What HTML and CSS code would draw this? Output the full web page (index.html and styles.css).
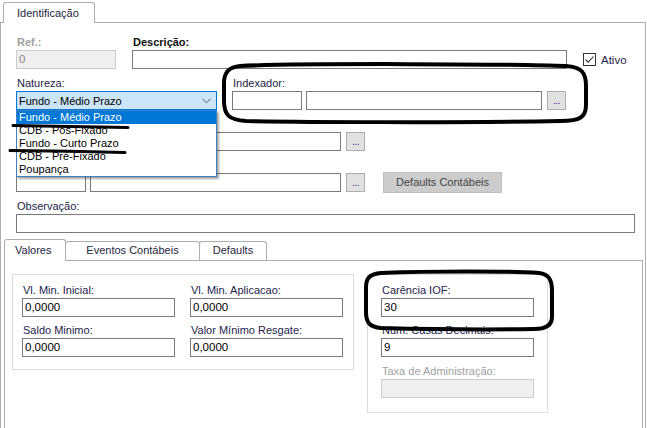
FILE: index.html
```html
<!DOCTYPE html>
<html>
<head>
<meta charset="utf-8">
<link rel="stylesheet" href="styles.css">
</head>
<body>
<div class="root">
  <div class="tabstrip">
    <div class="tab tab-main">Identificação</div>
  </div>
  <div class="page">
    <div class="row row-a">
      <div class="field w-ref">
        <div class="lbl bold disabled-text">Ref.:</div>
        <div class="input disabled">0</div>
      </div>
      <div class="field w-desc">
        <div class="lbl bold black">Descrição:</div>
        <div class="input"></div>
      </div>
      <div class="check">
        <span class="box"><svg width="11" height="11" viewBox="0 0 11 11"><path d="M1.5 5.5 L4.2 8.2 L9.5 2.5" fill="none" stroke="#333" stroke-width="1.1"/></svg></span>
        <span class="check-text">Ativo</span>
      </div>
    </div>

    <div class="row row-gap">
      <div class="field w-nat">
        <div class="lbl">Natureza:</div>
        <div class="combo"><span>Fundo - Médio Prazo</span>
          <svg class="chev" width="9" height="6" viewBox="0 0 9 6"><path d="M0.5 0.8 L4.5 4.8 L8.5 0.8" fill="none" stroke="#555" stroke-width="1"/></svg>
        </div>
      </div>
      <div class="field w-idx">
        <div class="lbl">Indexador:</div>
        <div class="inline">
          <div class="input w70"></div>
          <div class="input w236"></div>
          <div class="dots">...</div>
        </div>
      </div>
    </div>

    <div class="row row-gap">
      <div class="field">
        <div class="lbl"></div>
        <div class="inline">
          <div class="input w70"></div>
          <div class="input w251"></div>
          <div class="dots">...</div>
        </div>
      </div>
    </div>

    <div class="row row-gap row-end">
      <div class="field">
        <div class="lbl"></div>
        <div class="inline">
          <div class="input w70"></div>
          <div class="input w251"></div>
          <div class="dots">...</div>
        </div>
      </div>
      <div class="btn-defaults">Defaults Contábeis</div>
    </div>

    <div class="row row-gap">
      <div class="field">
        <div class="lbl">Observação:</div>
        <div class="input w-obs"></div>
      </div>
    </div>

    <div class="inner">
      <div class="inner-tabs">
        <div class="itab itab-active">Valores</div>
        <div class="itab w-ev">Eventos Contábeis</div>
        <div class="itab w-def">Defaults</div>
      </div>
      <div class="inner-page">
        <div class="group g1">
          <div class="grow">
            <div class="field">
              <div class="lbl">Vl. Min. Inicial:</div>
              <div class="input w153">0,0000</div>
            </div>
            <div class="field col2">
              <div class="lbl">Vl. Min. Aplicacao:</div>
              <div class="input w153">0,0000</div>
            </div>
          </div>
          <div class="grow grow-gap">
            <div class="field">
              <div class="lbl">Saldo Minimo:</div>
              <div class="input w153">0,0000</div>
            </div>
            <div class="field col2">
              <div class="lbl">Valor Mínimo Resgate:</div>
              <div class="input w153">0,0000</div>
            </div>
          </div>
        </div>
        <div class="group g2">
          <div class="field">
            <div class="lbl">Carência IOF:</div>
            <div class="input w153">30</div>
          </div>
          <div class="field grow-gap">
            <div class="lbl">Num. Casas Decimais:</div>
            <div class="input w153">9</div>
          </div>
          <div class="field grow-gap2">
            <div class="lbl disabled-text">Taxa de Administração:</div>
            <div class="input w153 disabled"></div>
          </div>
        </div>
      </div>
    </div>
  </div>

  <div class="dropdown">
    <div class="opt sel">Fundo - Médio Prazo</div>
    <div class="opt">CDB - Pós-Fixado</div>
    <div class="opt">Fundo - Curto Prazo</div>
    <div class="opt">CDB - Pré-Fixado</div>
    <div class="opt">Poupança</div>
  </div>

  <svg class="marks" width="647" height="428" viewBox="0 0 647 428">
    <path d="M240 66 C300 63 520 64 566 66 C582 67 586 73 586 86 L586 105 C586 117 580 121 561 121 C450 123 300 122 246 121 C229 120 224 115 224 101 L224 83 C224 72 229 67 240 66 Z" fill="none" stroke="#000" stroke-width="4"/>
    <path d="M381 273 C430 271 510 271 539 273 C549 274 552 280 552 291 L552 317 C552 325 546 329 534 329 C480 330 420 329 381 328 C369 327 366 322 366 312 L366 287 C366 278 370 274 381 273 Z" fill="none" stroke="#000" stroke-width="4"/>
    <path d="M13 125.5 Q70 126.5 128 127.5" fill="none" stroke="#000" stroke-width="3" stroke-linecap="round"/>
    <path d="M10 150.5 Q68 151 125 152.5" fill="none" stroke="#000" stroke-width="3" stroke-linecap="round"/>
  </svg>
</div>
</body>
</html>
```
FILE: styles.css
```css
* { box-sizing: border-box; }
html, body { margin: 0; padding: 0; }
body {
  width: 647px;
  height: 428px;
  overflow: hidden;
  background: #ffffff;
  font-family: "Liberation Sans", Arial, sans-serif;
  font-size: 11px;
  color: #1a1a1a;
}
.root { position: relative; width: 647px; height: 428px; overflow: hidden; }

.tabstrip { height: 22px; padding-left: 3px; display: flex; align-items: flex-end; }
.tab {
  background: #fff;
  border: 1px solid #adadad;
  border-bottom: none;
  border-radius: 3px 3px 0 0;
  color: #262640;
}
.tab-main {
  width: 92px; height: 21px; margin-bottom: -1px;
  padding: 3px 0 0 13px;
  line-height: 14px;
  position: relative; z-index: 1;
}

.page {
  width: 646px;
  height: 420px;
  border: 1px solid #adadad;
  padding: 13px 0 0 15px;
}

.row { display: flex; }
.row-gap { margin-top: 8px; }
.row-end { align-items: flex-end; }

.field { display: flex; flex-direction: column; }
.lbl {
  line-height: 13px;
  height: 13px;
  margin-bottom: 1px;
  padding-left: 1px;
  color: #24244a;
  white-space: nowrap;
}
.bold { font-weight: bold; }
.black { color: #111; }
.disabled-text { color: #a0a0a0; }

.input {
  height: 19px;
  border: 1px solid #7a7a7a;
  background: #fff;
  padding: 1px 0 0 2px;
  line-height: 15px;
  color: #000;
  font-size: 11.5px;
}
.input.disabled { background: #f0f0f0; border-color: #cccccc; color: #8a8a8a; }

.w-ref { width: 100px; }
.w-desc { width: 435px; margin-left: 16px; }
.w-nat { width: 201px; }
.w-idx { margin-left: 15px; }
.w70 { width: 70px; }
.w236 { width: 236px; margin-left: 4px; }
.w251 { width: 251px; margin-left: 4px; }
.w153 { width: 153px; }
.w-obs { width: 619px; }

.inline { display: flex; }

.check { display: flex; align-items: center; margin-left: 16px; margin-top: 17px; align-self: flex-start; }
.box {
  width: 13px; height: 13px; border: 1px solid #333; background: #fff;
  display: flex; align-items: center; justify-content: center;
}
.check-text { margin-left: 5px; color: #24244a; font-size: 11.5px; }

.combo {
  height: 19px;
  background: #cce4f7;
  border: 1px solid #0078d7;
  display: flex; align-items: center; justify-content: space-between;
  padding: 0 5px 0 2px;
  color: #000;
  font-size: 11px;
}
.chev { display: block; }

.dots {
  width: 19px; height: 19px; margin-left: 5px;
  background: #e1e1e1; border: 1px solid #adadad;
  text-align: center; line-height: 17px; font-size: 10px; color: #4b2f8a;
  letter-spacing: -0.5px;
}
.btn-defaults {
  width: 119px; height: 21px; margin-left: 18px; margin-bottom: -1px;
  background: #cccccc; border: 1px solid #bfbfbf;
  text-align: center; line-height: 19px; color: #454545;
}

.inner { margin-top: 6px; margin-left: -12px; width: 639px; }
.inner-tabs { display: flex; align-items: flex-end; height: 21px; }
.itab {
  height: 19px;
  border: 1px solid #adadad;
  border-bottom: none;
  border-radius: 3px 3px 0 0;
  background: #fff;
  text-align: center;
  line-height: 17px;
  color: #262640;
  margin-left: -1px;
}
.itab-active {
  width: 62px; height: 22px; margin-bottom: -1px; margin-left: 0;
  line-height: 20px; text-align: left; padding-left: 10px;
  position: relative; z-index: 1;
}
.w-ev { width: 135px; }
.w-def { width: 68px; }

.inner-page {
  height: 200px;
  border: 1px solid #adadad;
  padding: 13px 0 0 7px;
  display: flex; align-items: flex-start;
}
.group { border: 1px solid #dcdcdc; }
.g1 { width: 342px; padding: 9px 0 12px 9px; }
.g2 { width: 181px; margin-left: 13px; padding: 9px 0 14px 13px; }
.grow { display: flex; }
.grow-gap { margin-top: 7px; }
.grow-gap2 { margin-top: 8px; }
.col2 { margin-left: 15px; }

.dropdown {
  position: absolute;
  left: 16px; top: 110px;
  width: 201px; height: 67px;
  background: #fff;
  border: 1px solid #3f7fbf;
  box-shadow: 2px 2px 2px rgba(0,0,0,0.35);
  z-index: 5;
}
.opt { height: 13px; line-height: 13px; padding-left: 2px; color: #000; font-size: 11px; white-space: nowrap; }
.opt.sel { background: #0078d7; color: #fff; }

.marks { position: absolute; left: 0; top: 0; z-index: 10; pointer-events: none; }
```
